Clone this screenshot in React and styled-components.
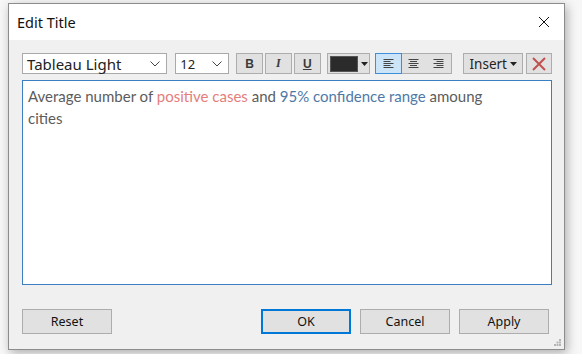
import React from 'react';
import styled, { createGlobalStyle } from 'styled-components';

const Global = createGlobalStyle`
  html, body {
    margin: 0;
    padding: 0;
    background: #f7f7f7;
  }
`;

const Page = styled.div`
  width: 582px;
  height: 354px;
  padding: 3px 0 0 8px;
  box-sizing: border-box;
  overflow: hidden;
`;

const Window = styled.div`
  width: 557px;
  height: 347px;
  box-sizing: border-box;
  border: 1px solid #8c8c8c;
  background: #f0f0f0;
  box-shadow: 2px 3px 10px rgba(0, 0, 0, 0.3);
  display: flex;
  flex-direction: column;
  font-family: "Noto Sans", "Open Sans", sans-serif;
  position: relative;
`;

const TitleBar = styled.div`
  height: 36px;
  background: #fff;
  display: flex;
  align-items: center;
  justify-content: space-between;
  padding: 0 14px 0 8px;
`;

const Title = styled.span`
  font-size: 14.5px;
  color: #111;
`;

const Body = styled.div`
  flex: 1;
  display: flex;
  flex-direction: column;
  padding: 13px 12px 15px 13px;
`;

const Toolbar = styled.div`
  display: flex;
  align-items: center;
  height: 21px;
`;

const Select = styled.div`
  width: ${(p) => p.$width}px;
  height: 21px;
  box-sizing: border-box;
  margin-right: ${(p) => p.$gap}px;
  background: #fff;
  border: 1px solid #a9a9a9;
  display: flex;
  align-items: center;
  justify-content: space-between;
  padding: 0 6px 0 4px;
  font-size: ${(p) => p.$size}px;
  color: #222;
`;

const ToolButton = styled.div`
  width: ${(p) => p.$width || 27}px;
  height: 21px;
  box-sizing: border-box;
  margin-right: ${(p) => p.$gap || 0}px;
  background: #e1e1e1;
  border: 1px solid #adadad;
  display: flex;
  align-items: center;
  justify-content: center;
  gap: 3px;
  font-size: 13.5px;
  color: #222;
`;

const Glyph = styled.span`
  font-family: ${(p) => (p.$serif ? '"Liberation Serif", serif' : '"Liberation Sans", sans-serif')};
  font-weight: bold;
  font-style: ${(p) => (p.$italic ? 'italic' : 'normal')};
  text-decoration: ${(p) => (p.$underline ? 'underline' : 'none')};
  font-size: 12px;
  color: #3a3a3a;
`;

const Swatch = styled.span`
  width: 26px;
  height: 14px;
  background: #2b2b2b;
  border: 1px solid #555;
`;

const AlignGroup = styled.div`
  display: flex;
  height: 21px;
  box-sizing: border-box;
  border: 1px solid #adadad;
  background: #e1e1e1;
  margin-right: 11px;
`;

const AlignButton = styled.div`
  width: 25px;
  height: 19px;
  box-sizing: border-box;
  display: flex;
  align-items: center;
  justify-content: center;
  background: ${(p) => (p.$active ? '#cce4f7' : 'transparent')};
  outline: ${(p) => (p.$active ? '1px solid #3c8fdb' : 'none')};
  outline-offset: 0;
`;

const Editor = styled.div`
  margin-top: 6px;
  flex: 1;
  background: #fff;
  border: 1px solid #3c7fc0;
  padding: 4px 55px 4px 5px;
  font-family: Lato, "Open Sans", sans-serif;
  font-size: 15px;
  line-height: 22px;
  color: #5c5c5c;
`;

const Mark = styled.span`
  color: ${(p) => p.$color};
`;

const Footer = styled.div`
  margin-top: 24px;
  display: flex;
  align-items: center;
`;

const DialogButton = styled.div`
  width: 90px;
  height: 25px;
  box-sizing: border-box;
  margin-left: ${(p) => p.$offset || 0}px;
  background: #e1e1e1;
  border: ${(p) => (p.$primary ? '2px solid #0078d7' : '1px solid #adadad')};
  display: flex;
  align-items: center;
  justify-content: center;
  font-size: 12.5px;
  color: #111;
`;

const Grip = styled.svg`
  position: absolute;
  right: 3px;
  bottom: 3px;
`;

const Chevron = () => (
  <svg width="10" height="6" viewBox="0 0 10 6">
    <path d="M0.5 0.5 L5 5 L9.5 0.5" fill="none" stroke="#444" strokeWidth="1" />
  </svg>
);

const Caret = () => (
  <svg width="7" height="4" viewBox="0 0 7 4">
    <path d="M0 0 H7 L3.5 4 Z" fill="#222" />
  </svg>
);

const AlignIcon = ({ align }) => {
  const rows = [10, 7, 10, 7, 10];
  return (
    <svg width="11" height="10" viewBox="0 0 11 10">
      {rows.map((w, i) => {
        let x = 0.5;
        if (align === 'center') x = (11 - w) / 2;
        if (align === 'right') x = 11 - w - 0.5;
        return <rect key={i} x={x} y={i * 2} width={w} height="1" fill="#444" />;
      })}
    </svg>
  );
};

const Cross = ({ size, color, width }) => (
  <svg width={size} height={size} viewBox={`0 0 ${size} ${size}`}>
    <path d={`M1 1 L${size - 1} ${size - 1} M${size - 1} 1 L1 ${size - 1}`} stroke={color} strokeWidth={width} />
  </svg>
);

export default function App() {
  return (
    <Page>
      <Global />
      <Window>
        <TitleBar>
          <Title>Edit Title</Title>
          <Cross size={12} color="#111" width={1} />
        </TitleBar>
        <Body>
          <Toolbar>
            <Select $width={146} $gap={8} $size={15}>
              Tableau Light
              <Chevron />
            </Select>
            <Select $width={54} $gap={7} $size={13}>
              12
              <Chevron />
            </Select>
            <ToolButton $gap={2}><Glyph>B</Glyph></ToolButton>
            <ToolButton $gap={2}><Glyph $serif $italic>I</Glyph></ToolButton>
            <ToolButton $gap={6}><Glyph $underline>U</Glyph></ToolButton>
            <ToolButton $width={44} $gap={5}><Swatch /><Caret /></ToolButton>
            <AlignGroup>
              <AlignButton $active><AlignIcon align="left" /></AlignButton>
              <AlignButton><AlignIcon align="center" /></AlignButton>
              <AlignButton><AlignIcon align="right" /></AlignButton>
            </AlignGroup>
            <ToolButton $width={60} $gap={3}>Insert<Caret /></ToolButton>
            <ToolButton $width={26}><Cross size={14} color="#c0504d" width={2} /></ToolButton>
          </Toolbar>
          <Editor>
            Average number of <Mark $color="#e57e7b">positive cases</Mark> and{' '}
            <Mark $color="#4e79a7">95% confidence range</Mark> amoung cities
          </Editor>
          <Footer>
            <DialogButton>Reset</DialogButton>
            <DialogButton $primary $offset={149}>OK</DialogButton>
            <DialogButton $offset={9}>Cancel</DialogButton>
            <DialogButton $offset={9}>Apply</DialogButton>
          </Footer>
        </Body>
        <Grip width="7" height="7" viewBox="0 0 7 7">
          {[[5, 0], [5, 2.5], [2.5, 2.5], [5, 5], [2.5, 5], [0, 5]].map(([x, y]) => (
            <rect key={`${x}-${y}`} x={x} y={y} width="2" height="2" fill="#b5b5b5" />
          ))}
        </Grip>
      </Window>
    </Page>
  );
}
